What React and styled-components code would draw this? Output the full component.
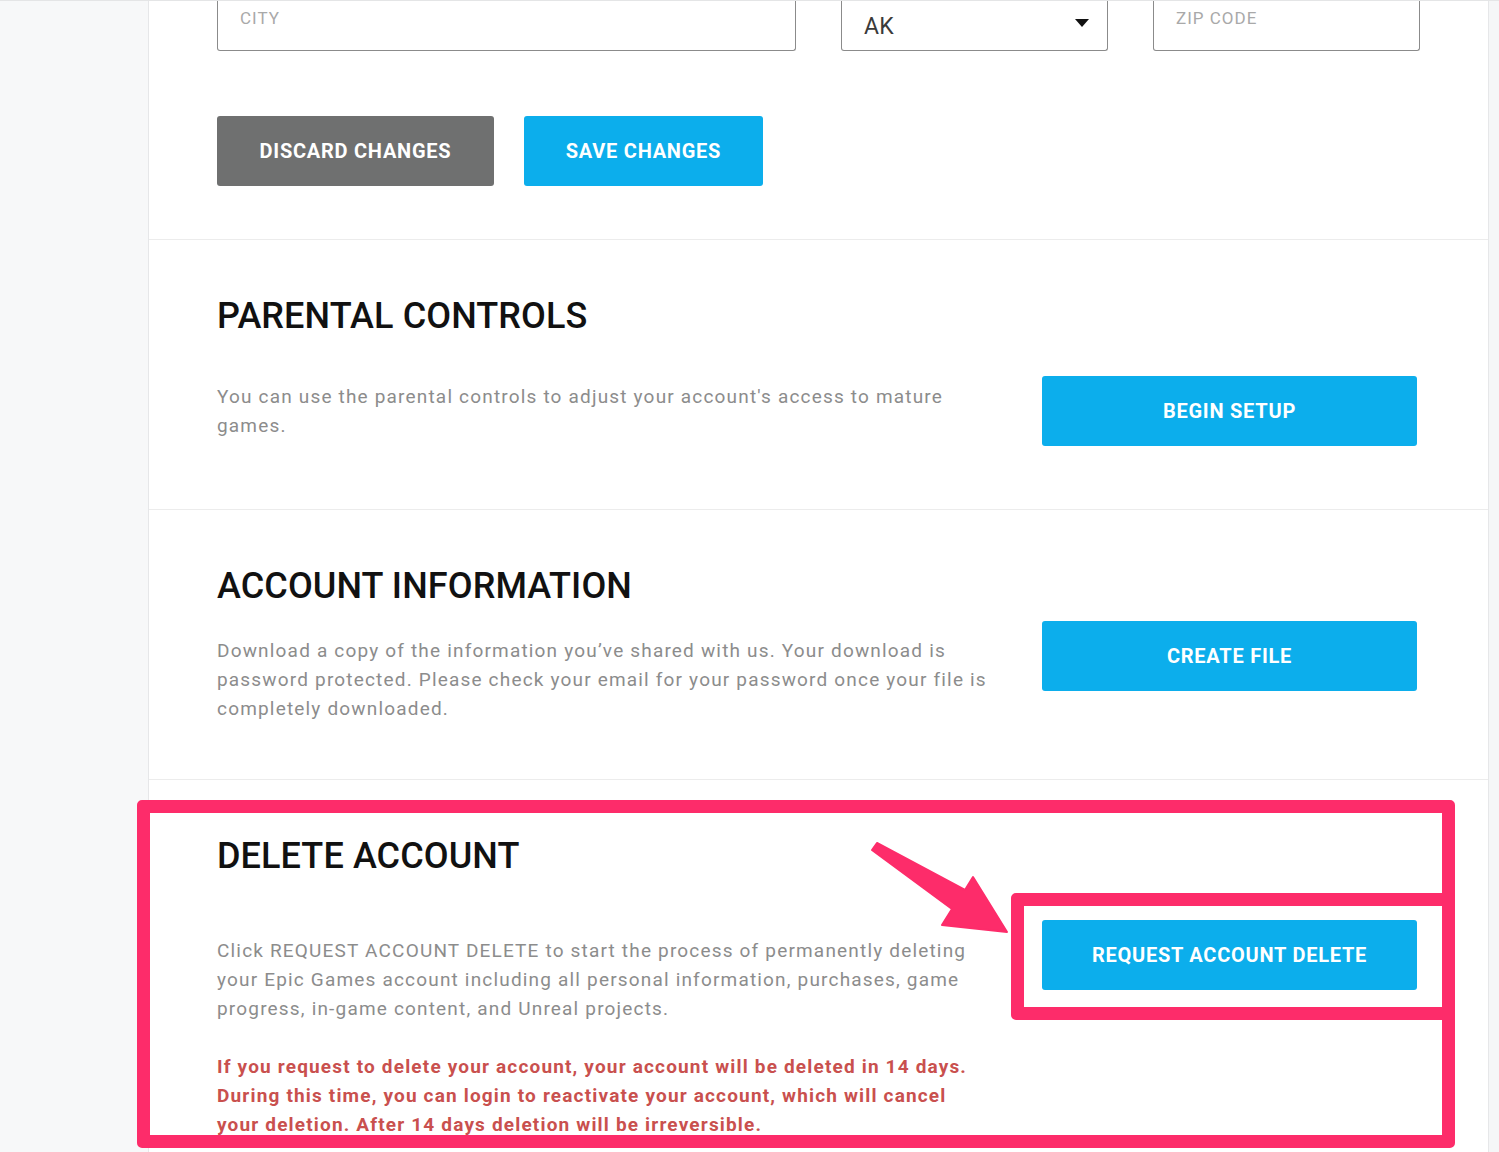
import React from 'react';
import styled, { createGlobalStyle } from 'styled-components';

const GlobalStyle = createGlobalStyle`
  html, body {
    margin: 0;
    padding: 0;
    overflow: hidden;
    background: #f7f8f9;
  }
  body {
    font-family: Roboto, 'Liberation Sans', sans-serif;
  }
  * {
    box-sizing: border-box;
  }
`;

const Shell = styled.div`
  position: relative;
  display: grid;
  grid-template-columns: 149px 1340px 10px;
  min-height: 1152px;
  border-top: 1px solid #e4e5e6;
  background: #f7f8f9;
`;

const SideRail = styled.div`
  background: #f7f8f9;
  border-right: 1px solid #e6e7e9;
`;

const Main = styled.main`
  background: #fff;
  border-right: 1px solid #e6e7e9;
`;

const RightRail = styled.div`
  background: #f5f6f7;
`;

const TopBlock = styled.div`
  padding: 0 68px 53px 68px;
`;

const FieldRow = styled.div`
  display: flex;
  column-gap: 45px;
`;

const Field = styled.div`
  position: relative;
  width: ${(p) => p.w}px;
  height: 50px;
  border: 1px solid #8b8b8b;
  border-top: none;
  border-radius: 0 0 3px 3px;
  padding: ${(p) => (p.select ? '12px 22px' : '7px 22px')};
  font-size: ${(p) => (p.select ? '23px' : '17px')};
  letter-spacing: ${(p) => (p.select ? '0.3px' : '1px')};
  color: ${(p) => (p.select ? '#3a3a3a' : '#a9a9a9')};
`;

const Caret = styled.svg`
  position: absolute;
  right: 17px;
  top: 17px;
`;

const ButtonRow = styled.div`
  display: flex;
  column-gap: 30px;
  margin-top: 65px;
`;

const Button = styled.button`
  all: unset;
  box-sizing: border-box;
  display: flex;
  align-items: center;
  justify-content: center;
  width: ${(p) => p.w}px;
  height: 70px;
  border-radius: 3px;
  background: ${(p) => (p.muted ? '#6f7070' : '#0caeec')};
  color: #fff;
  font-family: Roboto, 'Liberation Sans', sans-serif;
  font-weight: 700;
  font-size: 20px;
  letter-spacing: 0.75px;
  cursor: pointer;
`;

const Section = styled.section`
  height: 270px;
  border-top: 1px solid #ececec;
  padding: 54px 71px 0 68px;
`;

const Heading = styled.h2`
  margin: 0;
  font-size: 36px;
  line-height: 44px;
  font-weight: 500;
  color: #111;
  letter-spacing: 0.1px;
`;

const Body = styled.div`
  display: grid;
  grid-template-columns: 775px 375px;
  column-gap: 50px;
  align-items: start;
  margin-top: ${(p) => p.gap}px;
`;

const Text = styled.div`
  margin-top: ${(p) => p.shift}px;
`;

const Para = styled.p`
  margin: 0;
  font-size: 19px;
  line-height: 29px;
  letter-spacing: ${(p) => (p.warn ? '1.17px' : '1.18px')};
  color: ${(p) => (p.warn ? '#c9504e' : '#8c8c8c')};
  font-weight: ${(p) => (p.warn ? 700 : 400)};
  & + & {
    margin-top: 29px;
  }
`;

const Frame = styled.div`
  position: absolute;
  left: ${(p) => p.x}px;
  top: ${(p) => p.y}px;
  width: ${(p) => p.w}px;
  height: ${(p) => p.h}px;
  border: 13px solid #fd2c6a;
  border-radius: 5px;
  pointer-events: none;
`;

const ArrowLayer = styled.svg`
  position: absolute;
  left: 0;
  top: -1px;
  pointer-events: none;
`;

const sections = [
  {
    title: 'PARENTAL CONTROLS',
    gap: 38,
    shift: 6,
    text: [
      "You can use the parental controls to adjust your account's access to mature games.",
    ],
    action: 'BEGIN SETUP',
  },
  {
    title: 'ACCOUNT INFORMATION',
    gap: 13,
    shift: 15,
    text: [
      'Download a copy of the information you\u2019ve shared with us. Your download is password protected. Please check your email for your password once your file is completely downloaded.',
    ],
    action: 'CREATE FILE',
  },
  {
    title: 'DELETE ACCOUNT',
    gap: 42,
    shift: 16,
    text: [
      'Click REQUEST ACCOUNT DELETE to start the process of permanently deleting your Epic Games account including all personal information, purchases, game progress, in-game content, and Unreal projects.',
    ],
    warning:
      'If you request to delete your account, your account will be deleted in 14 days. During this time, you can login to reactivate your account, which will cancel your deletion. After 14 days deletion will be irreversible.',
    action: 'REQUEST ACCOUNT DELETE',
  },
];

const App = () => {
  return (
    <>
      <GlobalStyle />
      <Shell>
        <SideRail />
        <Main>
          <TopBlock>
            <FieldRow>
              <Field w={579}>CITY</Field>
              <Field w={267} select>
                AK
                <Caret width='16' height='10' viewBox='0 0 16 10'>
                  <path d='M1 1h14L8 9z' fill='#111' />
                </Caret>
              </Field>
              <Field w={267}>ZIP CODE</Field>
            </FieldRow>
            <ButtonRow>
              <Button w={277} muted>
                DISCARD CHANGES
              </Button>
              <Button w={239}>SAVE CHANGES</Button>
            </ButtonRow>
          </TopBlock>
          {sections.map(({ title, gap, shift, text, warning, action }) => (
            <Section key={title}>
              <Heading>{title}</Heading>
              <Body gap={gap}>
                <Text shift={shift}>
                  {text.map((t) => (
                    <Para key={t}>{t}</Para>
                  ))}
                  {warning && <Para warn>{warning}</Para>}
                </Text>
                <Button w={375}>{action}</Button>
              </Body>
            </Section>
          ))}
        </Main>
        <RightRail />

        <Frame x={137} y={799} w={1318} h={348} />
        <Frame x={1011} y={892} w={444} h={127} />
        <ArrowLayer width='1499' height='1152' viewBox='0 0 1499 1152'>
          <polygon
            points='872,850 877,843 965,890 973,877 1007,932 942,925 952,909'
            fill='#fd2c6a'
            stroke='#fd2c6a'
            strokeWidth='2'
            strokeLinejoin='round'
          />
        </ArrowLayer>
      </Shell>
    </>
  );
};

export default App;
